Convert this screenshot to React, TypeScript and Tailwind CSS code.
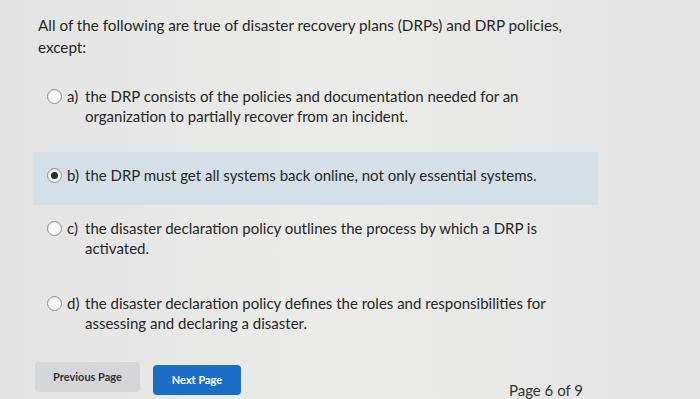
import React from "react";

type Option = {
  letter: string;
  first: string;
  second?: string;
  selected?: boolean;
};

const options: Option[] = [
  {
    letter: "a)",
    first: "the DRP consists of the policies and documentation needed for an",
    second: "organization to partially recover from an incident.",
  },
  {
    letter: "b)",
    first: "the DRP must get all systems back online, not only essential systems.",
    selected: true,
  },
  {
    letter: "c)",
    first: "the disaster declaration policy outlines the process by which a DRP is",
    second: "activated.",
  },
  {
    letter: "d)",
    first: "the disaster declaration policy defines the roles and responsibilities for",
    second: "assessing and declaring a disaster.",
  },
];

function Radio({ selected }: { selected?: boolean }) {
  return (
    <div className="w-[15px] h-[15px] rounded-full border border-[#8c8f92] bg-[#f7f7f7] flex items-center justify-center flex-shrink-0 shadow-[inset_0_1px_1px_rgba(0,0,0,0.08)]">
      {selected && <div className="w-[7px] h-[7px] rounded-full bg-[#2b2b2b]" />}
    </div>
  );
}

function OptionRow({ option }: { option: Option }) {
  return (
    <div
      className={`flex items-start gap-[5px] ${
        option.selected ? "bg-[#d4dfe7] pt-[13px] pb-[20px] mr-[102px] -ml-[5px] pl-[14px]" : "pl-[9px]"
      }`}
    >
      <div className="pt-[3px]">
        <Radio selected={option.selected} />
      </div>
      <div className="text-[15px] leading-[20px] text-[#262626]">
        <div className="flex">
          <span className="w-[18px]">{option.letter}</span>
          <span>{option.first}</span>
        </div>
        {option.second && <div className="pl-[18px]">{option.second}</div>}
      </div>
    </div>
  );
}

export default function App() {
  return (
    <div
      className="w-[700px] h-[399px] overflow-hidden bg-gradient-to-r from-[#e3e4e3] via-[#ebebea] to-[#e4e5e4] text-[#262626]"
      style={{ fontFamily: "Lato, 'Open Sans', sans-serif" }}
    >
      <div className="pl-[38px] pt-[14px]">
        <p className="text-[15.25px] leading-[22px] w-[560px]">
          All of the following are true of disaster recovery plans (DRPs) and DRP policies,
          <br />
          except:
        </p>

        <div className="flex flex-col mt-[28px]">
          <OptionRow option={options[0]} />
          <div className="mt-[26px]">
            <OptionRow option={options[1]} />
          </div>
          <div className="mt-[13px]">
            <OptionRow option={options[2]} />
          </div>
          <div className="mt-[35px]">
            <OptionRow option={options[3]} />
          </div>
        </div>

        <div className="flex items-start mt-[29px] -ml-[3px]">
          <button className="w-[105px] h-[30px] rounded-[4px] bg-[#d4d6d8] text-[11px] font-bold text-[#333]">
            Previous Page
          </button>
          <button className="w-[88px] h-[30px] ml-[13px] mt-[3px] rounded-[4px] bg-[#1b6dc6] text-[11px] font-bold text-white">
            Next Page
          </button>
          <div className="ml-auto mr-[117px] mt-[18px] text-[15px] leading-[20px] text-[#333]">Page 6 of 9</div>
        </div>
      </div>
    </div>
  );
}
